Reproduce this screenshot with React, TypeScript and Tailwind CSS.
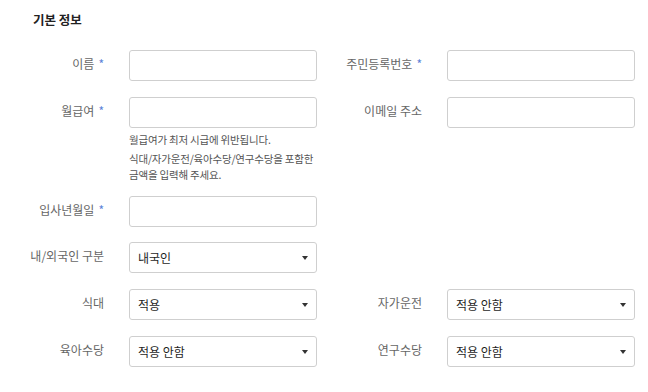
import type { ReactNode } from 'react'

const font = { fontFamily: '"Noto Sans CJK KR", "Noto Sans", sans-serif' }

function Label({ text, required }: { text: string; required?: boolean }) {
  return (
    <div className="w-[104px] mr-[25px] shrink-0 text-right text-[12px] leading-[16px] text-[#666] pt-[6px]">
      {text}
      {required && <span className="ml-1 text-[#5a83d8]">*</span>}
    </div>
  )
}

function TextInput() {
  return <div className="w-[188px] h-[31px] rounded-[3px] border border-[#cfcfcf] bg-white" />
}

function Select({ value }: { value: string }) {
  return (
    <div className="w-[188px] h-[31px] rounded-[3px] border border-[#cfcfcf] bg-white flex items-center justify-between pl-2 pr-[8px]">
      <span className="text-[12px] text-[#1e1e1e]">{value}</span>
      <span className="w-0 h-0 border-l-[3.5px] border-r-[3.5px] border-t-[4px] border-l-transparent border-r-transparent border-t-[#333]" />
    </div>
  )
}

function Field({ label, required, children }: { label: string; required?: boolean; children: ReactNode }) {
  return (
    <div className="flex items-start">
      <Label text={label} required={required} />
      <div>{children}</div>
    </div>
  )
}

export default function App() {
  return (
    <div className="w-[648px] h-[392px] bg-white overflow-hidden" style={font}>
      <h2 className="pl-[33px] pt-[11px] text-[12.5px] leading-[18px] font-semibold text-[#222]">기본 정보</h2>

      <div className="mt-[21px] flex flex-col">
        <div className="grid grid-cols-[318px_318px]">
          <Field label="이름" required>
            <TextInput />
          </Field>
          <Field label="주민등록번호" required>
            <TextInput />
          </Field>
        </div>

        <div className="grid grid-cols-[318px_318px] mt-4">
          <Field label="월급여" required>
            <TextInput />
            <div className="mt-1 w-[188px] text-[10.5px] leading-[16px] text-[#555] tracking-[-0.2px] break-keep">
              <p>월급여가 최저 시급에 위반됩니다.</p>
              <p className="mt-[3px]">식대/자가운전/육아수당/연구수당을 포함한 금액을 입력해 주세요.</p>
            </div>
          </Field>
          <Field label="이메일 주소">
            <TextInput />
          </Field>
        </div>

        <div className="grid grid-cols-[318px_318px] mt-[13px]">
          <Field label="입사년월일" required>
            <TextInput />
          </Field>
        </div>

        <div className="grid grid-cols-[318px_318px] mt-[15px]">
          <Field label="내/외국인 구분">
            <Select value="내국인" />
          </Field>
        </div>

        <div className="grid grid-cols-[318px_318px] mt-4">
          <Field label="식대">
            <Select value="적용" />
          </Field>
          <Field label="자가운전">
            <Select value="적용 안함" />
          </Field>
        </div>

        <div className="grid grid-cols-[318px_318px] mt-4">
          <Field label="육아수당">
            <Select value="적용 안함" />
          </Field>
          <Field label="연구수당">
            <Select value="적용 안함" />
          </Field>
        </div>
      </div>
    </div>
  )
}
